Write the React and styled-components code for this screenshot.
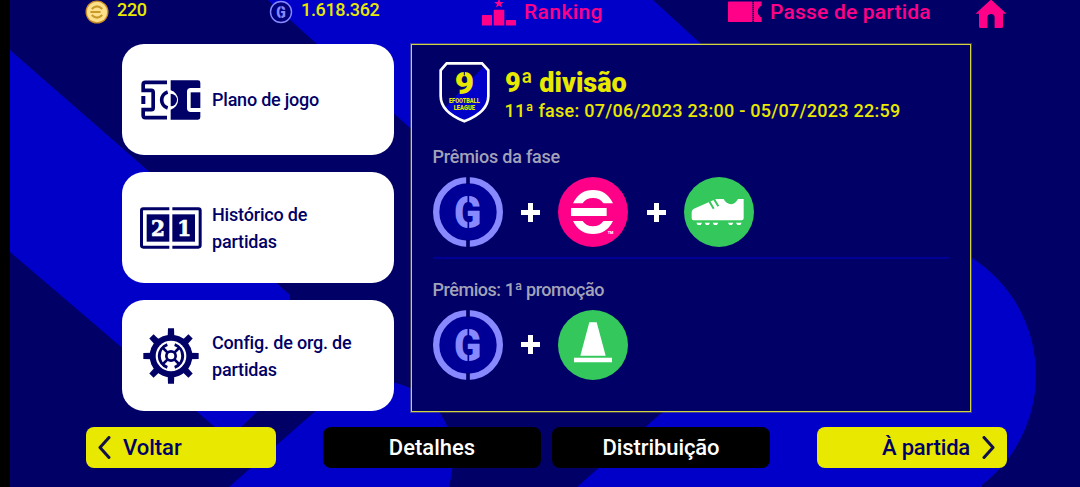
import React from 'react';
import styled, { createGlobalStyle } from 'styled-components';

const c = {
  navy: '#000066',
  blue: '#0000c8',
  deep: '#000096',
  yellow: '#e8e800',
  pink: '#ff0088',
  green: '#34c85c',
  lilac: '#8888ff',
  grey: '#a3a3b8',
};

const GlobalStyle = createGlobalStyle`
  * { box-sizing: border-box; }
  body { margin: 0; background: #000; overflow: hidden; }
`;

const Screen = styled.div`
  position: relative;
  width: 1080px;
  height: 487px;
  padding-left: 10px;
  background: #000;
  overflow: hidden;
  font-family: Roboto, "Liberation Sans", sans-serif;
  font-weight: 500;
`;

const Backdrop = styled.svg`
  position: absolute;
  top: 0;
  left: 10px;
  width: 1070px;
  height: 487px;
`;

const Content = styled.div`
  position: relative;
  display: flex;
  flex-direction: column;
`;

const Header = styled.header`
  display: flex;
  align-items: flex-start;
  height: 43.5px;
  padding-left: 75px;
`;

const HeaderItem = styled.div`
  display: flex;
  align-items: flex-start;
  width: ${(p) => p.$width}px;
  gap: ${(p) => p.$gap}px;
`;

const Text = styled.span`
  display: block;
  white-space: nowrap;
  color: ${(p) => p.$color || c.navy};
  font-size: ${(p) => p.$size || 18}px;
  line-height: ${(p) => p.$line || 24}px;
  letter-spacing: ${(p) => p.$track || 0}px;
`;

const Main = styled.main`
  display: flex;
  gap: 16.5px;
  height: 368px;
  padding-left: 112px;
`;

const CardList = styled.nav`
  display: flex;
  flex-direction: column;
  gap: 17px;
  width: 272px;
`;

const Card = styled.button`
  display: flex;
  align-items: center;
  height: 111.3px;
  padding: ${(p) => p.$top || 0}px 0 0 18px;
  border: 0;
  border-radius: 22px;
  background: #fff;
  font: inherit;
  text-align: left;
`;

const CardIcon = styled.span`
  display: flex;
  width: 72px;
  flex: none;
  padding-left: ${(p) => p.$indent || 0}px;
`;

const Panel = styled.section`
  display: flex;
  flex-direction: column;
  width: 560.5px;
  padding: 17px 20px 0 21px;
  border: 1px solid #d4d440;
  box-shadow: 0 0 0 1px rgba(208, 208, 60, 0.3);
  background: ${c.navy};
`;

const PanelHead = styled.div`
  display: flex;
  gap: 14px;
  height: 83px;
  padding-left: 5px;
`;

const Titles = styled.div`
  display: flex;
  flex-direction: column;
  padding-top: 5px;
`;

const Title = styled.h1`
  margin: 0;
  color: ${c.yellow};
  font-size: 28px;
  font-weight: 900;
  line-height: 32px;
  white-space: nowrap;
  transform: scaleX(${(p) => p.$stretch});
  transform-origin: left;
`;

const Rewards = styled.div`
  display: flex;
  align-items: center;
  gap: 18.4px;
  margin-top: ${(p) => p.$top}px;
`;

const Divider = styled.hr`
  width: 516px;
  height: 2px;
  margin: 9.5px 0 19px;
  border: 0;
  background: ${c.deep};
`;

const Footer = styled.footer`
  display: flex;
  height: 41px;
  margin-top: 15.5px;
  padding-left: 76px;
`;

const Button = styled.button`
  display: flex;
  align-items: center;
  justify-content: ${(p) => p.$align || 'center'};
  gap: ${(p) => p.$gap || 0}px;
  width: ${(p) => p.$width}px;
  margin-right: ${(p) => p.$after || 0}px;
  padding: 0 12px;
  border: 0;
  border-radius: 8px;
  background: ${(p) => p.$bg};
  font: inherit;
`;

const Background = () => (
  <Backdrop viewBox="10 0 1070 487">
    <rect x="10" width="1070" height="487" fill={c.navy} />
    <g fill={c.blue}>
      <path d="M268 0H653L701 44V380H690L410 128Z" />
      <path d="M10 50L145 168L290 295V380L240 428H216L10 252Z" />
      <path d="M229 487L345 385Q360 381 379 381A74 74 0 0 1 453 455Q453 470 449 487Z" />
      <path d="M577 487L659 415L900 239V487Z" />
      <ellipse cx="900" cy="375" rx="136" ry="138" />
      <rect x="880" y="440" width="102" height="47" />
    </g>
  </Backdrop>
);

const CoinIcon = () => (
  <svg width="24" height="24" viewBox="0 0 24 24">
    <circle cx="12" cy="12" r="11.5" fill="#c98d28" />
    <circle cx="12" cy="12" r="10.2" fill="#ffe08a" />
    <g fill="none" stroke="#c79a2c" strokeWidth="2.2">
      <path d="M6.8 9Q12 3.8 17.2 9M6.8 15Q12 20.2 17.2 15M5.4 12H15.5" />
    </g>
  </svg>
);

const GpIcon = () => (
  <svg width="24" height="24" viewBox="0 0 24 24">
    <circle cx="12" cy="12" r="10.5" fill="#00007c" stroke={c.lilac} strokeWidth="1.4" />
    <text x="12" y="17.6" textAnchor="middle" fontSize="16" fontWeight="900" fill={c.lilac} textLength="9.5" lengthAdjust="spacingAndGlyphs">G</text>
    <path d="M12 5V9M12 15V19" stroke="#00007c" strokeWidth="0.8" />
  </svg>
);

const RankingIcon = () => (
  <svg width="34" height="26" viewBox="0 0 34 26" fill={c.pink}>
    <rect x="0" y="15" width="10" height="10.5" rx="0.6" />
    <rect x="11.7" y="9.8" width="10.6" height="15.7" rx="0.6" />
    <rect x="24" y="20" width="10" height="5.5" rx="0.6" />
    <path d="M17-1.5L18.3 2H21.8L19 4.2L20 7.6L17 5.6L14 7.6L15 4.2L12.2 2H15.7Z" />
  </svg>
);

const TicketIcon = () => (
  <svg width="35" height="24" viewBox="0 0 35 24" fill={c.pink}>
    <rect x="0" y="1.6" width="24.4" height="20.4" rx="0.8" />
    <path d="M26 1.6H33.6V5.5Q29.800 7.5 29.800 11.5T33.6 17.500V22H26Z" />
    <path d="M25.200 2V22" stroke={c.pink} strokeWidth="1.8" strokeDasharray="1 1" opacity="0.6" />
  </svg>
);

const HomeIcon = () => (
  <svg width="32" height="29" viewBox="0 0 32 29" fill={c.pink}>
    <path d="M16-0.5L31.5 13.8H28V26.5Q28 28 26.500 28H19.600V17.500A3.600 3.600 0 0 0 12.400 17.500V28H5.500Q4 28 4 26.500V13.800H0.500Z" />
  </svg>
);

const PitchIcon = () => (
  <svg width="60" height="40" viewBox="63 120 180 120">
    <g fill="none" stroke={c.navy} strokeWidth="11">
      <path d="M141 127H76Q69.500 127 69.500 134V151H94Q99.500 151 99.500 157V203Q99.500 209 94 209H69.500V226Q69.500 233 76 233H141" />
      <path d="M143 156A25 25 0 0 0 143 204" />
    </g>
    <rect x="64" y="168" width="12" height="24" fill={c.navy} />
    <path d="M152 121H234Q241 121 241 128V144H212Q201 144 201 155V205Q201 216 212 216H241V232Q241 239 234 239H152V209A30 30 0 0 0 152 151Z" fill={c.navy} />
    <path d="M152 161A19 19 0 0 1 152 199Z" fill={c.navy} />
    <rect x="212" y="157" width="29" height="47" fill={c.navy} />
  </svg>
);

const ScoreIcon = () => (
  <svg width="62" height="42" viewBox="60 127 186 126">
    <g fill="none" stroke={c.navy} strokeWidth="9">
      <path d="M148 132.500H70Q64.500 132.500 64.500 138V242Q64.500 247.500 70 247.500H148" />
      <path d="M157 132.500H235Q240.500 132.500 240.500 138V242Q240.500 247.500 235 247.500H157" />
    </g>
    <rect x="80" y="149" width="68" height="82" fill={c.navy} />
    <rect x="157" y="149" width="68" height="82" fill={c.navy} />
    <g fill="#fff" stroke="#fff" strokeWidth="2" fontFamily="DejaVu Serif" fontWeight="700" fontSize="66" textAnchor="middle">
      <text x="114" y="214" textLength="42" lengthAdjust="spacingAndGlyphs">2</text>
      <text x="193" y="214" textLength="42" lengthAdjust="spacingAndGlyphs">1</text>
    </g>
  </svg>
);

const GearIcon = () => (
  <svg width="56" height="56" viewBox="-84 -84 168 168">
    <g fill={c.navy}>
      {[0, 45, 90, 135, 180, 225, 270, 315].map((a) => (
        <path key={a} d="M-10-56L-9-83H9L10-56Z" transform={`rotate(${a})`} />
      ))}
      <circle r="64" />
    </g>
    <circle r="46" fill="#fff" />
    <g fill="none" stroke={c.navy} strokeWidth="9">
      <path d="M-11-34A36 36 0 0 0-11 34M11-34A36 36 0 0 1 11 34" />
      <circle r="14" strokeWidth="8" />
      <path d="M-11-11L-24-24M11-11L24-24M-11 11L-24 24M11 11L24 24" strokeWidth="8" />
    </g>
  </svg>
);

const ShieldIcon = () => (
  <svg width="53" height="62" viewBox="82 66 159 186">
    <path d="M108 70H214L233 91V168Q233 216 161 244Q90 216 90 168V91Z" fill={c.navy} />
    <path d="M218 80L233 96V168Q233 216 161 244Q120 228 102 203Z" fill={c.blue} />
    <path d="M108 70H214L233 91V168Q233 216 161 244Q90 216 90 168V91Z" fill="none" stroke="#fff" strokeWidth="8" />
    <g fill={c.yellow} fontWeight="900" textAnchor="middle">
      <text x="161" y="163" fontSize="96" textLength="58" lengthAdjust="spacingAndGlyphs">9</text>
      <text x="161" y="189" fontSize="19" textLength="92" lengthAdjust="spacingAndGlyphs">EFOOTBALL</text>
      <text x="161" y="211" fontSize="19" textLength="64" lengthAdjust="spacingAndGlyphs">LEAGUE</text>
    </g>
    <path d="M161 92V106" stroke={c.navy} strokeWidth="3" />
  </svg>
);

const GpCoin = () => (
  <svg width="70" height="70" viewBox="0 0 210 210">
    <circle cx="105" cy="105" r="95" fill={c.deep} />
    <circle cx="105" cy="105" r="95.500" fill="none" stroke={c.lilac} strokeWidth="19" />
    <path d="M105 0V22M105 188V210" stroke={c.navy} strokeWidth="11" />
    <text x="104" y="152" textAnchor="middle" fontSize="134" fontWeight="900" fill={c.lilac} textLength="82" lengthAdjust="spacingAndGlyphs">G</text>
    <path d="M106 50V82M106 128V160" stroke={c.deep} strokeWidth="5" />
  </svg>
);

const ECoin = () => (
  <svg width="70" height="70" viewBox="416 36 210 210">
    <circle cx="521" cy="141" r="105" fill={c.pink} />
    <g fill="#fff">
      <path d="M461 115Q480 75 521 75Q562 75 581 115H552Q542 99 521 99Q500 99 490 115Z" />
      <rect x="455" y="129" width="107" height="24" />
      <path d="M461 168Q480 207 521 207Q562 207 581 168H552Q542 184 521 184Q500 184 490 168Z" />
      <text x="565" y="207" fontSize="12" fontWeight="900" textLength="17" lengthAdjust="spacingAndGlyphs">TM</text>
    </g>
  </svg>
);

const BootCoin = () => (
  <svg width="70" height="70" viewBox="793 36 210 210">
    <circle cx="898" cy="141" r="105" fill={c.green} />
    <path d="M816 143Q816 134 826 130L889 102H912Q919 117 935 118Q947 116 955 102H972V160Q972 166 966 166H824Q816 166 816 158Z" fill="#fff" />
    <path d="M867 106L882 131M881 99L896 124" stroke={c.green} strokeWidth="6" />
    <path d="M830 173H847L843 180H834ZM855 173H871L867 180H859ZM879 173H896L892 180H883ZM925 173H941L937 180H929ZM949 173H966L962 180H953Z" fill="#fff" />
  </svg>
);

const ConeCoin = () => (
  <svg width="70" height="70" viewBox="416 105 210 210">
    <circle cx="521" cy="210" r="105" fill={c.green} />
    <path d="M510 142H532L559 242H483ZM464 248H578V262H464Z" fill="#fff" />
  </svg>
);

const Plus = () => (
  <svg width="19" height="19" viewBox="0 0 19 19">
    <path d="M9.500 0V19M0 9.500H19" stroke="#fff" strokeWidth="5" />
  </svg>
);

const Chevron = ({ flip }) => (
  <svg width="13" height="23" viewBox="0 0 13 23">
    <path
      d={flip ? 'M2 1.500L11 11.500L2 21.500' : 'M11 1.500L2 11.500L11 21.500'}
      fill="none" stroke="#10104a" strokeWidth="3" strokeLinecap="round" strokeLinejoin="round"
    />
  </svg>
);

export default function App() {
  return (
    <Screen>
      <GlobalStyle />
      <Background />
      <Content>
        <Header>
          <HeaderItem $width={184} $gap={8}>
            <CoinIcon />
            <Text $color={c.yellow} $line={20} $track={-0.3}>220</Text>
          </HeaderItem>
          <HeaderItem $width={213} $gap={8}>
            <GpIcon />
            <Text $color={c.yellow} $line={20} $track={-0.35}>1.618.362</Text>
          </HeaderItem>
          <HeaderItem $width={246} $gap={8}>
            <RankingIcon />
            <Text $color={c.pink} $size={21} $track={0.4}>Ranking</Text>
          </HeaderItem>
          <HeaderItem $width={247} $gap={7}>
            <TicketIcon />
            <Text $color={c.pink} $size={21} $track={0.2}>Passe de partida</Text>
          </HeaderItem>
          <HomeIcon />
        </Header>
        <Main>
          <CardList>
            <Card $top={1}>
              <CardIcon $indent={1}><PitchIcon /></CardIcon>
              <Text $line={27} $track={-0.22}>Plano de jogo</Text>
            </Card>
            <Card $top={2}>
              <CardIcon><ScoreIcon /></CardIcon>
              <Text $line={27} $track={-0.18}>Histórico de<br />partidas</Text>
            </Card>
            <Card $top={1}>
              <CardIcon $indent={3}><GearIcon /></CardIcon>
              <Text $line={27} $track={-0.18}>Config. de org. de<br />partidas</Text>
            </Card>
          </CardList>
          <Panel>
            <PanelHead>
              <ShieldIcon />
              <Titles>
                <Title $stretch={0.965}>9ª divisão</Title>
                <Text $color={c.yellow} $track={0.26}>11ª fase: 07/06/2023 23:00 - 05/07/2023 22:59</Text>
              </Titles>
            </PanelHead>
            <Text $color={c.grey} $track={-0.22}>Prêmios da fase</Text>
            <Rewards $top={8.5}>
              <GpCoin />
              <Plus />
              <ECoin />
              <Plus />
              <BootCoin />
            </Rewards>
            <Divider />
            <Text $color={c.grey} $track={-0.46}>Prêmios: 1ª promoção</Text>
            <Rewards $top={8}>
              <GpCoin />
              <Plus />
              <ConeCoin />
            </Rewards>
          </Panel>
        </Main>
        <Footer>
          <Button $bg={c.yellow} $width={190} $after={47} $align="flex-start" $gap={12}>
            <Chevron />
            <Text $size={22}>Voltar</Text>
          </Button>
          <Button $bg="#000" $width={218} $after={11}>
            <Text $size={22} $color="#fff">Detalhes</Text>
          </Button>
          <Button $bg="#000" $width={218} $after={47}>
            <Text $size={22} $color="#fff" $track={-0.1}>Distribuição</Text>
          </Button>
          <Button $bg={c.yellow} $width={190} $align="flex-end" $gap={12}>
            <Text $size={22} $track={-0.2}>À partida</Text>
            <Chevron flip />
          </Button>
        </Footer>
      </Content>
    </Screen>
  );
}
